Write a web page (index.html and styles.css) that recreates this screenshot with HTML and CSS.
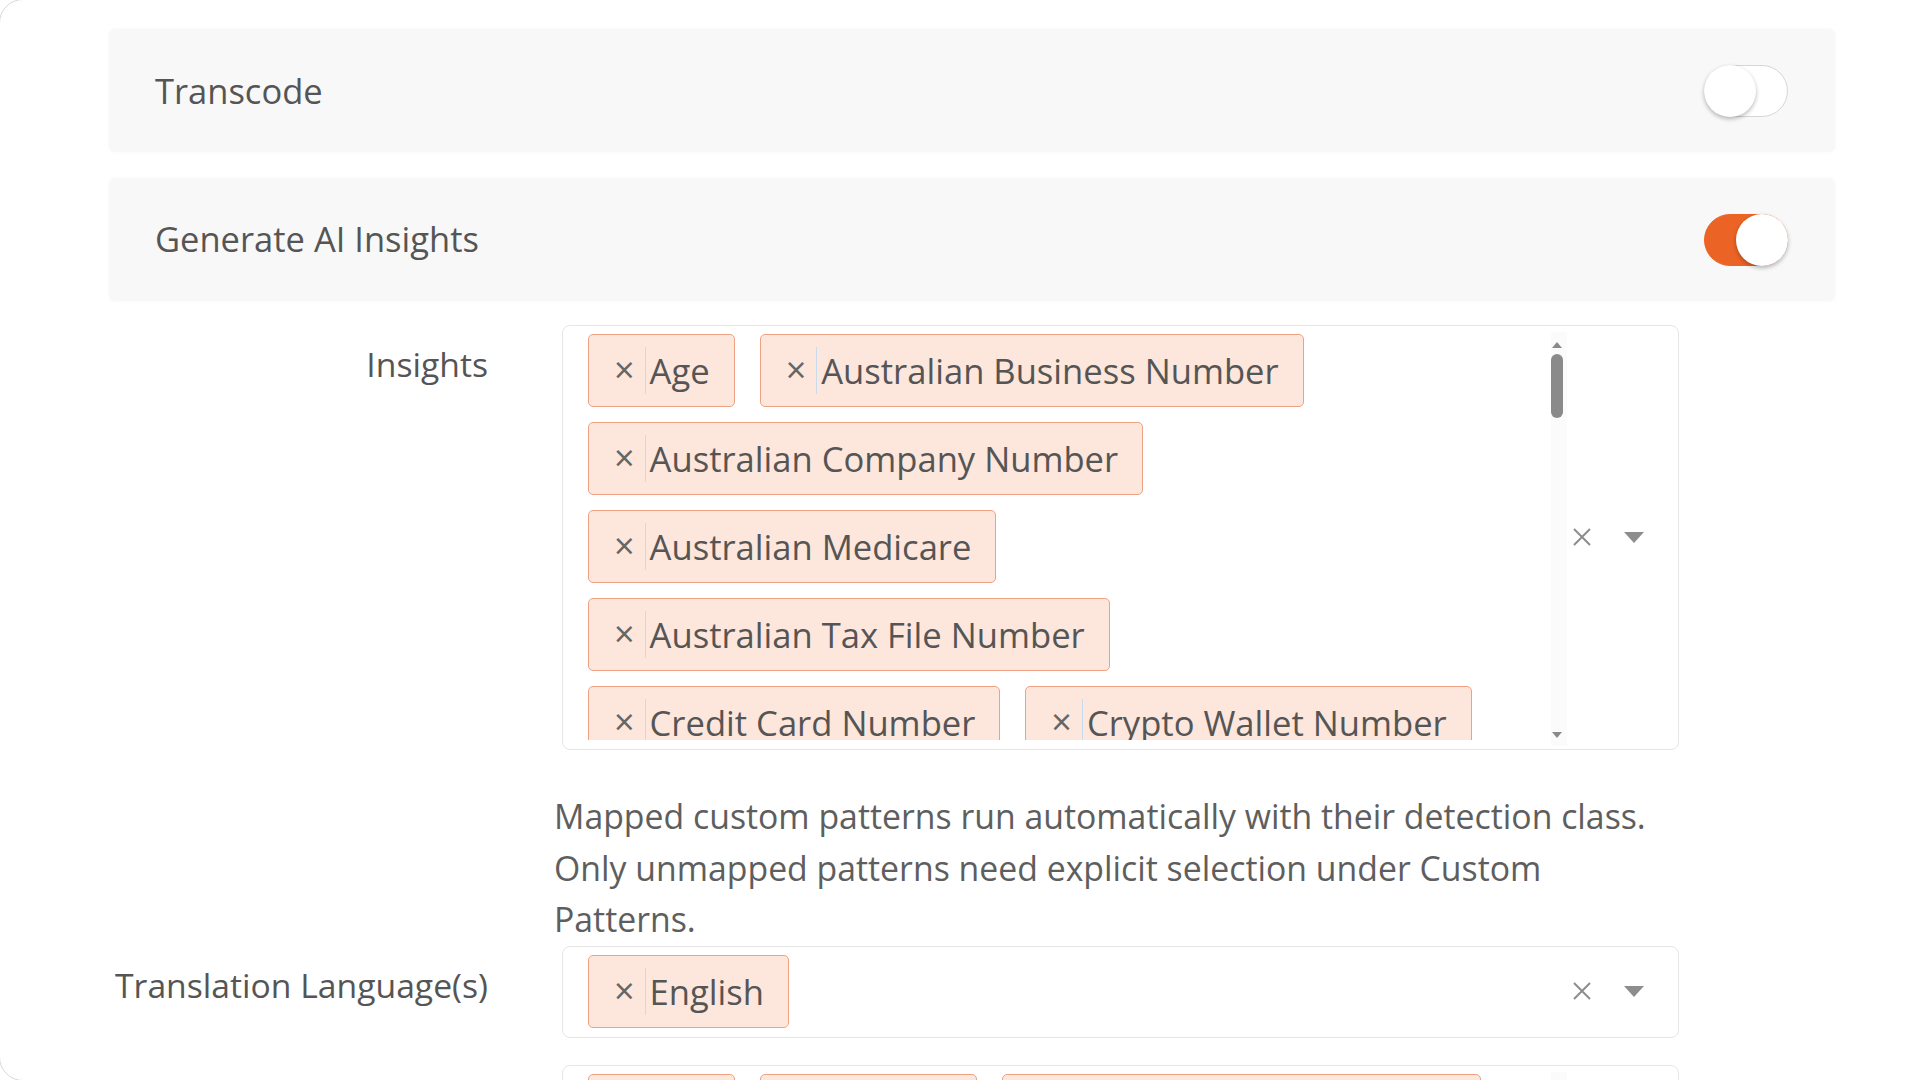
FILE: index.html
```html
<!DOCTYPE html>
<html lang="en">
<head>
    <meta charset="UTF-8">
    <meta name="viewport" content="width=device-width, initial-scale=1.0">
    <title>Processing options</title>
    <link rel="stylesheet" href="styles.css">
</head>
<body>
    <div class="card">
        <div class="switch-row">
            <span class="switch-label">Transcode</span>
            <label class="switch">
                <input type="checkbox">
                <span class="switch-track"></span>
            </label>
        </div>
        <div class="switch-row">
            <span class="switch-label">Generate AI Insights</span>
            <label class="switch">
                <input type="checkbox" checked>
                <span class="switch-track"></span>
            </label>
        </div>

        <div class="field field-first">
            <label class="field-label">Insights</label>
            <div class="field-control">
                <div class="multi-select">
                    <ul class="choices choices-scroll">
                        <li class="choice"><span class="choice-remove">&times;</span>Age</li>
                        <li class="choice"><span class="choice-remove">&times;</span>Australian Business Number</li>
                        <li class="choice"><span class="choice-remove">&times;</span>Australian Company Number</li>
                        <li class="choice"><span class="choice-remove">&times;</span>Australian Medicare</li>
                        <li class="choice"><span class="choice-remove">&times;</span>Australian Tax File Number</li>
                        <li class="choice"><span class="choice-remove">&times;</span>Credit Card Number</li>
                        <li class="choice"><span class="choice-remove">&times;</span>Crypto Wallet Number</li>
                        <li class="choice"><span class="choice-remove">&times;</span>Date of Birth</li>
                        <li class="choice"><span class="choice-remove">&times;</span>Email Address</li>
                    </ul>
                    <div class="scrollbar">
                        <span class="scroll-up"></span>
                        <span class="scroll-thumb"></span>
                        <span class="scroll-down"></span>
                    </div>
                    <div class="select-actions">
                        <svg class="select-clear" width="18" height="18" viewBox="0 0 18 18">
                            <path d="M1 1 L17 17 M17 1 L1 17" stroke="#8d8d8d" stroke-width="2" fill="none"/>
                        </svg>
                        <span class="select-arrow"></span>
                    </div>
                </div>
                <p class="help-text">Mapped custom patterns run automatically with their detection class. Only unmapped patterns need explicit selection under Custom Patterns.</p>
            </div>
        </div>

        <div class="field">
            <label class="field-label">Translation Language(s)</label>
            <div class="field-control">
                <div class="multi-select">
                    <ul class="choices">
                        <li class="choice"><span class="choice-remove">&times;</span>English</li>
                    </ul>
                    <div class="select-actions">
                        <svg class="select-clear" width="18" height="18" viewBox="0 0 18 18">
                            <path d="M1 1 L17 17 M17 1 L1 17" stroke="#8d8d8d" stroke-width="2" fill="none"/>
                        </svg>
                        <span class="select-arrow"></span>
                    </div>
                </div>
            </div>
        </div>

        <div class="field field-last">
            <label class="field-label">Redact</label>
            <div class="field-control">
                <div class="multi-select">
                    <ul class="choices choices-scroll">
                        <li class="choice"><span class="choice-remove">&times;</span>Age</li>
                        <li class="choice"><span class="choice-remove">&times;</span>Address</li>
                        <li class="choice"><span class="choice-remove">&times;</span>Australian Bank Account</li>
                    </ul>
                    <div class="scrollbar">
                        <span class="scroll-up"></span>
                        <span class="scroll-thumb"></span>
                        <span class="scroll-down"></span>
                    </div>
                    <div class="select-actions">
                        <svg class="select-clear" width="18" height="18" viewBox="0 0 18 18">
                            <path d="M1 1 L17 17 M17 1 L1 17" stroke="#8d8d8d" stroke-width="2" fill="none"/>
                        </svg>
                        <span class="select-arrow"></span>
                    </div>
                </div>
            </div>
        </div>
    </div>
</body>
</html>
```

FILE: styles.css
```css
html,
body {
    margin: 0;
    padding: 0;
    height: 100%;
    overflow: hidden;
    background-color: #ffffff;
}

body {
    font-family: "Open Sans", "Noto Sans", sans-serif;
    color: #555555;
}

.card {
    box-sizing: border-box;
    width: 1990px;
    height: 1082px;
    margin: -1px;
    padding: 29px 0 0 109px;
    border: 1px solid #d9d9d9;
    border-radius: 24px;
    overflow: hidden;
}

/* toggle rows */
.switch-row {
    box-sizing: border-box;
    display: flex;
    justify-content: space-between;
    align-items: center;
    width: 1726px;
    height: 123px;
    padding: 0 47px 0 46px;
    margin-bottom: 26px;
    background-color: #f8f8f8;
    border-radius: 6px;
    box-shadow: 0 0 4px rgba(0, 0, 0, 0.03);
}

.switch-row:nth-child(2) .switch-label {
    margin-top: -3px;
}

.switch-label {
    font-size: 34.5px;
}

.switch {
    position: relative;
    display: block;
    width: 84px;
    height: 52px;
}

.switch input {
    display: none;
}

.switch-track {
    box-sizing: border-box;
    display: block;
    width: 100%;
    height: 100%;
    border: 1px solid #d6d6d6;
    border-radius: 26px;
    background-color: #ffffff;
}

.switch-track::after {
    content: "";
    position: absolute;
    top: 0;
    left: 0;
    width: 52px;
    height: 52px;
    border-radius: 50%;
    background-color: #ffffff;
    box-shadow: 0 2px 4px rgba(0, 0, 0, 0.28);
}

.switch input:checked + .switch-track {
    background-color: #eb6425;
    border-color: #eb6425;
}

.switch input:checked + .switch-track::after {
    left: 32px;
}

/* form fields */
.field {
    display: grid;
    grid-template-columns: 379px 1125px;
    column-gap: 66px;
}

.field-first {
    margin-top: -2px;
}

.field-last {
    margin-top: 27px;
}

.field-label {
    padding-top: 14px;
    font-size: 33.7px;
    line-height: 51px;
    text-align: right;
}

.field-last .field-label {
    visibility: hidden;
}

.multi-select {
    box-sizing: border-box;
    display: flex;
    align-items: center;
    margin-left: 8px;
    padding: 8px 0 9px 25px;
    border: 1px solid #e6e6e6;
    border-radius: 8px;
    background-color: #ffffff;
}

.choices {
    display: flex;
    flex-wrap: wrap;
    align-content: flex-start;
    gap: 15px 25px;
    flex: 1;
    margin: 0;
    padding: 0;
    list-style: none;
}

.choices-scroll {
    flex: 0 0 925px;
    height: 406px;
    margin-right: 38px;
    overflow: hidden;
}

.choice {
    box-sizing: border-box;
    display: flex;
    align-items: center;
    height: 73px;
    padding: 0 24px 0 25px;
    font-size: 34.6px;
    white-space: nowrap;
    background-color: #fde6dc;
    border: 1px solid #eea283;
    border-radius: 5px;
}

.choice-remove {
    height: 47px;
    padding-right: 10px;
    margin-right: 4px;
    font-size: 36px;
    line-height: 46px;
    color: #666666;
    border-right: 1px solid #c7dcef;
}

/* fake scrollbar drawn beside the choice list */
.scrollbar {
    display: flex;
    flex-direction: column;
    align-items: center;
    align-self: stretch;
    width: 16px;
    margin: -2px 0 -6px 0;
    background-color: #fbfbfb;
}

.scroll-up,
.scroll-down {
    width: 0;
    height: 0;
    margin-left: -4px;
    border-left: 5px solid transparent;
    border-right: 5px solid transparent;
}

.scroll-up {
    margin-top: 10px;
    border-bottom: 6px solid #8a8a8a;
}

.scroll-down {
    margin-top: auto;
    margin-bottom: 8px;
    border-top: 6px solid #8a8a8a;
}

.scroll-thumb {
    width: 12px;
    height: 64px;
    margin-top: 6px;
    margin-left: -4px;
    border-radius: 6px;
    background-color: #8a8a8a;
}

.select-actions {
    display: flex;
    align-items: center;
    gap: 33px;
    margin-left: auto;
    padding: 0 34px 0 5px;
}

.select-clear {
    display: block;
}

.select-arrow {
    width: 0;
    height: 0;
    border-left: 10px solid transparent;
    border-right: 10px solid transparent;
    border-top: 11px solid #8d8d8d;
}

.help-text {
    margin: 41px 0 0 0;
    font-size: 33.8px;
    line-height: 51.5px;
    color: #5e5e5e;
}
```
